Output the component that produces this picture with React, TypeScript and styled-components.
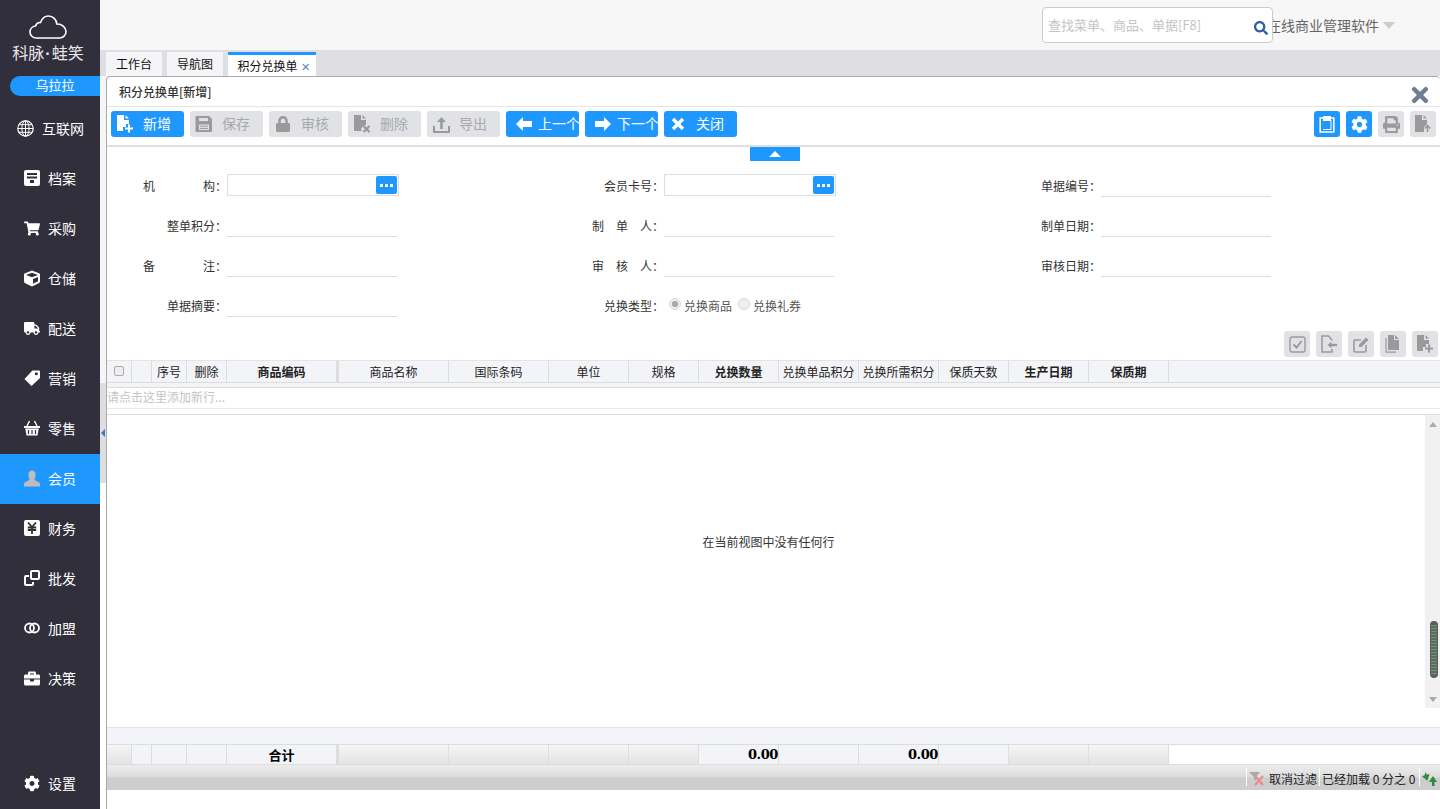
import React from "react";
import styled, { createGlobalStyle } from "styled-components";
import {
  FaBriefcase,
  FaCog,
  FaCube,
  FaLock,
  FaPrint,
  FaSearch,
  FaShoppingCart,
  FaTimes,
  FaTruck,
} from "react-icons/fa";

const BLUE = "#1e98ff";

const GlobalStyle = createGlobalStyle`
  html, body {
    margin: 0;
    padding: 0;
    height: 100%;
    background: #fff;
    overflow: hidden;
  }
  * { box-sizing: border-box; }
  body {
    font-family: "Noto Sans CJK SC", "Liberation Sans", sans-serif;
    font-size: 12px;
    color: #333;
  }
`;

/* drawn icons */
const Globe = () => (
  <svg width="17" height="17" viewBox="0 0 17 17" fill="none" stroke="#fff" strokeWidth="1">
    <circle cx="8.500" cy="8.500" r="7.700" strokeWidth="1.200" />
    <ellipse cx="8.500" cy="8.500" rx="3.600" ry="7.700" />
    <path d="M8.500 1v15M1 8.500h15M2 4.700h13M2 12.300h13" />
  </svg>
);
const Archive = () => (
  <svg width="16" height="16" viewBox="0 0 16 16">
    <rect width="16" height="16" rx="2" fill="#fff" />
    <path d="M3 3h10v2H3zM3 6.500h10v2H3zM6 10h4v3H6z" fill="#322f3c" />
  </svg>
);
const Tag = () => (
  <svg width="16" height="16" viewBox="0 0 16 16">
    <path d="M8.500.5H15a1 1 0 0 1 1 1V8l-8.500 8-7-7z" fill="#fff" />
    <circle cx="12.300" cy="3.700" r="1.500" fill="#322f3c" />
  </svg>
);
const Basket = () => (
  <svg width="16" height="16" viewBox="0 0 16 16">
    <path d="M3 6l2.500-5M13 6l-2.500-5" stroke="#fff" strokeWidth="1.400" fill="none" />
    <path d="M0 6h16v2H0z" fill="#fff" />
    <path d="M1.300 8.500h13.400L13.500 15.500h-11z" fill="#fff" />
    <path d="M4.500 10v4M8 10v4M11.500 10v4" stroke="#322f3c" strokeWidth="1.200" />
  </svg>
);
const Person = () => (
  <svg width="17" height="17" viewBox="0 0 17 17">
    <ellipse cx="8.500" cy="4.800" rx="3.800" ry="4.800" fill="#bdbdbd" />
    <path d="M0 17v-2.500C0 12 4.500 12 6 9h5c1.500 3 6 3 6 5.500V17z" fill="#bdbdbd" />
  </svg>
);
const Yen = () => (
  <svg width="16" height="16" viewBox="0 0 16 16">
    <rect width="16" height="16" rx="2" fill="#fff" />
    <path d="M4 2.500l4 4.500 4-4.500M3.800 7.500h8.400M3.800 10h8.400M8 7v7" fill="none" stroke="#322f3c" strokeWidth="1.800" />
  </svg>
);
const Wholesale = () => (
  <svg width="16" height="16" viewBox="0 0 16 16" fill="none" stroke="#fff" strokeWidth="2">
    <rect x="7" y="1" width="8" height="8" rx="1" />
    <path d="M5 6H2a1 1 0 0 0-1 1v7a1 1 0 0 0 1 1h6a1 1 0 0 0 1-1v-2" />
  </svg>
);
const Rings = () => (
  <svg width="16" height="12" viewBox="0 0 16 12" fill="none" stroke="#fff" strokeWidth="1.800">
    <circle cx="5.500" cy="6" r="4.500" />
    <circle cx="10.500" cy="6" r="4.500" />
  </svg>
);
const FilePlus = ({ color }: { color: string }) => (
  <svg width="18" height="18" viewBox="0 0 18 18">
    <path d="M1 0h7v5h5v4h-3v3H7v4H1z" fill={color} />
    <path d="M9.500 0v3.500H13z" fill={color} />
    <path d="M13 9.500v8M9 13.500h8" stroke={color} strokeWidth="2" />
  </svg>
);
const FileCross = ({ color }: { color: string }) => (
  <svg width="18" height="18" viewBox="0 0 18 18">
    <path d="M1 0h7v5h5v5l-3 1-2 3 1 2H1z" fill={color} />
    <path d="M9.500 0v3.500H13z" fill={color} />
    <path d="M10.500 11l6 6M16.500 11l-6 6" stroke={color} strokeWidth="2.200" />
  </svg>
);
const Floppy = ({ color }: { color: string }) => (
  <svg width="18" height="18" viewBox="0 0 18 18">
    <path d="M1.500 1H14l3 3v12a1 1 0 0 1-1 1H1.500a1 1 0 0 1-1-1V2a1 1 0 0 1 1-1z" fill={color} />
    <path d="M4 3h9v3H4zM4 9.500h10V15H4z" fill="#e0e2e6" />
    <path d="M5 11.200h8M5 13.400h8" stroke={color} strokeWidth="1" />
  </svg>
);
const Upload = ({ color }: { color: string }) => (
  <svg width="17" height="17" viewBox="0 0 17 17" fill="none">
    <path d="M1 10v6h15v-6" stroke={color} strokeWidth="2" />
    <path d="M8.500 13V4" stroke={color} strokeWidth="2.600" />
    <path d="M4 6l4.500-5L13 6z" fill={color} />
  </svg>
);
const ArrowLeft = () => (
  <svg width="16" height="14" viewBox="0 0 16 14">
    <path d="M0 7l7-7v4h9v6H7v4z" fill="#fff" />
  </svg>
);
const ArrowRight = () => (
  <svg width="16" height="14" viewBox="0 0 16 14">
    <path d="M16 7L9 0v4H0v6h9v4z" fill="#fff" />
  </svg>
);
const Cross = () => (
  <svg width="14" height="14" viewBox="0 0 14 14">
    <path d="M2 2l10 10M12 2L2 12" stroke="#fff" strokeWidth="3.400" />
  </svg>
);
const Dots = () => (
  <svg width="13" height="3" viewBox="0 0 13 3">
    <path d="M0 0h3v3H0zM5 0h3v3H5zM10 0h3v3h-3z" fill="#fff" />
  </svg>
);
const Clipboard = () => (
  <svg width="16" height="18" viewBox="0 0 16 18" fill="none" stroke="#fff">
    <path d="M4 3H1.200v14h13.600V3H12" strokeWidth="1.600" />
    <path d="M4.500 1.500h7V5h-7z" fill="#fff" />
    <path d="M4 5.500h8v9H4" strokeWidth="1" />
  </svg>
);
const FileUp = ({ color }: { color: string }) => (
  <svg width="18" height="18" viewBox="0 0 18 18">
    <path d="M1 0h7v5h5v4l-3 3v5H1z" fill={color} />
    <path d="M9.500 0v3.500H13z" fill={color} />
    <path d="M13.500 17v-6M10.800 13.500l2.700-3 2.700 3" fill="none" stroke={color} strokeWidth="1.600" />
  </svg>
);
const CheckBoxIcon = ({ color }: { color: string }) => (
  <svg width="17" height="17" viewBox="0 0 17 17" fill="none" stroke={color}>
    <rect x="1" y="1" width="15" height="15" rx="2" strokeWidth="1.400" />
    <path d="M4.500 8.500l3 3 5-6.500" strokeWidth="2" />
  </svg>
);
const FileImport = ({ color }: { color: string }) => (
  <svg width="18" height="18" viewBox="0 0 18 18" fill="none" stroke={color}>
    <path d="M12 5.500V5L8.500 1H2v16h10v-3" strokeWidth="1.500" />
    <path d="M17 10H10" strokeWidth="2.400" />
    <path d="M11.500 6.800v6.400L7.500 10z" fill={color} stroke="none" />
  </svg>
);
const EditBox = ({ color }: { color: string }) => (
  <svg width="17" height="17" viewBox="0 0 17 17" fill="none" stroke={color}>
    <path d="M13 9v6a1 1 0 0 1-1 1H2a1 1 0 0 1-1-1V5a1 1 0 0 1 1-1h6" strokeWidth="1.600" />
    <path d="M6 8.500l7-7 2.500 2.500-7 7H6z" fill={color} stroke="none" />
  </svg>
);
const Copies = ({ color }: { color: string }) => (
  <svg width="16" height="18" viewBox="0 0 16 18">
    <path d="M3 0h6v5h5v10H3z" fill={color} />
    <path d="M10 0v4h4z" fill={color} />
    <path d="M1 3v14.200h10" fill="none" stroke={color} strokeWidth="1.200" />
  </svg>
);
const Cloud = () => (
  <svg width="38" height="24" viewBox="0 0 38 24" fill="none" stroke="#fff" strokeWidth="1.600">
    <path d="M9 23H7.500C3.800 23 1 20.300 1 17c0-3 2.400-5.600 5.500-6C7.400 8.400 9.500 7.200 11.500 7.500 13 3.500 16 1 19.500 1c4.500 0 8 3.500 8.300 8 4.900-.3 9.200 3.300 9.200 7.500 0 3.700-2.800 6.500-6.500 6.500z" />
  </svg>
);
const FilterOff = () => (
  <svg width="15" height="14" viewBox="0 0 15 14">
    <path d="M0 0h11L7 5v4L5 7V5z" fill="#a9a9a9" />
    <path d="M6 4l8 9M14 4l-8 9" stroke="#e88" strokeWidth="2" />
  </svg>
);
const Refresh = () => (
  <svg width="15" height="14" viewBox="0 0 15 14">
    <path d="M5 0v3h3L4 9 0 3h2.500z" fill="#2e8b3d" transform="rotate(-15 4 4)" />
    <path d="M10 14v-4H7l4-6 4 6h-2.500v4z" fill="#2e8b3d" />
  </svg>
);

/* page frame */
const Page = styled.div`
  display: flex;
  width: 1440px;
  height: 809px;
  overflow: hidden;
`;

const Sidebar = styled.aside`
  width: 100px;
  flex: none;
  display: flex;
  flex-direction: column;
  background: #322f3c;
`;

const LogoBox = styled.div`
  height: 76px;
  padding: 15px 4px 0 0;
  display: flex;
  flex-direction: column;
  align-items: center;
`;

const LogoText = styled.div`
  color: #e8e8e8;
  font-size: 16px;
  line-height: 20px;
  margin-top: 3px;
  white-space: nowrap;
  span {
    font-family: "Liberation Sans", sans-serif;
    font-weight: 700;
    margin: 0 1px;
  }
`;

const UserBadge = styled.div`
  height: 20px;
  margin-left: 10px;
  margin-bottom: 8px;
  border-radius: 10px 0 0 10px;
  background: ${BLUE};
  color: #fff;
  font-size: 13px;
  text-align: center;
  line-height: 17px;
`;

const Menu = styled.nav`
  display: flex;
  flex-direction: column;
  flex: 1;
`;

const MenuItem = styled.div<{ $active?: boolean; $wide?: boolean; $bottom?: boolean }>`
  height: 50px;
  flex: none;
  display: flex;
  align-items: center;
  gap: 8px;
  padding: 0 0 2px ${(p) => (p.$wide ? 17 : 24)}px;
  color: #fff;
  font-size: 14px;
  background: ${(p) => (p.$active ? BLUE : "transparent")};
  margin-top: ${(p) => (p.$bottom ? "auto" : 0)};
`;

const IconSlot = styled.span<{ $wide?: boolean }>`
  width: ${(p) => (p.$wide ? 17 : 16)}px;
  display: flex;
  justify-content: center;
  align-items: center;
  color: #fff;
  font-size: 17px;
`;

const Main = styled.main`
  flex: 1;
  min-width: 0;
  display: flex;
  flex-direction: column;
`;

const TopBar = styled.header`
  height: 50px;
  flex: none;
  background: #f7f7f8;
  display: flex;
  align-items: center;
  justify-content: flex-end;
  padding-right: 45px;
`;

const SearchBox = styled.div`
  position: relative;
  width: 231px;
  height: 36px;
  margin-right: -6px;
  z-index: 1;
  background: #fff;
  border: 1px solid #ccc;
  border-radius: 4px;
  padding: 7px 5px;
  color: #c4c4c4;
  font-size: 13px;
  line-height: 20px;
  svg {
    position: absolute;
    right: 4px;
    top: 13px;
    color: #2a5ea8;
    font-size: 14px;
  }
`;

const CompanyName = styled.div`
  display: flex;
  align-items: center;
  gap: 4px;
  padding-bottom: 1px;
  color: #666;
  font-size: 14px;
  white-space: nowrap;
  &::after {
    content: "";
    border-left: 6px solid transparent;
    border-right: 6px solid transparent;
    border-top: 7px solid #ccc;
    margin-top: 1px;
  }
`;

const TabBar = styled.div`
  height: 26px;
  flex: none;
  background: #dedee3;
  display: flex;
  gap: 5px;
  padding: 2px 0 0 6px;
`;

const Tab = styled.div<{ $active?: boolean }>`
  width: ${(p) => (p.$active ? 88 : 56)}px;
  border-top: ${(p) => (p.$active ? `3px solid ${BLUE}` : "0")};
  background: ${(p) => (p.$active ? "#fff" : "#f5f5f7")};
  padding-left: ${(p) => (p.$active ? 3 : 0)}px;
  display: flex;
  align-items: center;
  justify-content: center;
  gap: 3px;
  color: #111;
  line-height: 22px;
  white-space: nowrap;
  span { color: #5a7fb5; font-size: 11px; }
`;

const Workspace = styled.div`
  flex: 1;
  min-height: 0;
  display: flex;
`;

const Gutter = styled.div`
  width: 6px;
  flex: none;
  display: flex;
  flex-direction: column;
  background: #f5f5f7;
`;

const GutterHandle = styled.div`
  height: 100px;
  margin-top: 307px;
  background: #dedee0;
  display: flex;
  align-items: center;
  justify-content: center;
  &::before {
    content: "";
    border-top: 4px solid transparent;
    border-bottom: 4px solid transparent;
    border-right: 4px solid #3a78c2;
  }
`;

const GutterRest = styled.div`
  flex: 1;
  background: #fff;
`;

const Panel = styled.section`
  flex: 1;
  min-width: 0;
  display: flex;
  flex-direction: column;
  border-left: 1px solid #a9a9a9;
  border-top: 1px solid #a9a9a9;
  border-top-left-radius: 4px;
  border-top-right-radius: 4px;
  background: #fff;
`;

const PanelTitle = styled.div`
  height: 30px;
  flex: none;
  display: flex;
  align-items: center;
  justify-content: space-between;
  padding: 0 8px 0 12px;
  border-bottom: 1px solid #e4e4e4;
  color: #333;
  font-weight: 500;
  svg { color: #6f7f92; font-size: 24px; margin-top: 3px; margin-bottom: -3px; }
`;

const Toolbar = styled.div`
  height: 40px;
  flex: none;
  display: flex;
  justify-content: space-between;
  padding: 4px 4px 0 4px;
  border-bottom: 2px solid #e0e0e0;
`;

const ButtonRow = styled.div`
  display: flex;
  gap: 6px;
  height: 26px;
`;

const ActionButton = styled.button<{ $on?: boolean }>`
  width: 73px;
  height: 26px;
  border: 0;
  border-radius: 3px;
  padding: 0 0 2px 5px;
  display: flex;
  align-items: center;
  gap: 9px;
  background: ${(p) => (p.$on ? BLUE : "#e0e2e6")};
  color: ${(p) => (p.$on ? "#fff" : "#a9a9a9")};
  font-family: inherit;
  font-size: 14px;
  white-space: nowrap;
  overflow: hidden;
`;

const ToolIcon = styled.span<{ $shift?: number }>`
  width: 18px;
  flex: none;
  display: flex;
  align-items: center;
  justify-content: center;
  margin-bottom: -2px;
  transform: translateX(${(p) => p.$shift ?? 0}px);
  color: #9a9a9a;
  font-size: 16px;
`;

const IconButton = styled.button<{ $on?: boolean }>`
  width: 26px;
  height: 26px;
  padding: 0;
  border: 0;
  border-radius: 3px;
  display: flex;
  align-items: center;
  justify-content: center;
  background: ${(p) => (p.$on ? BLUE : "#e0e2e6")};
  color: ${(p) => (p.$on ? "#fff" : "#9a9a9a")};
  font-size: 17px;
`;

const CollapseTab = styled.div`
  width: 50px;
  height: 14px;
  margin: 0 0 0 643px;
  flex: none;
  background: ${BLUE};
  display: flex;
  align-items: center;
  justify-content: center;
  &::before {
    content: "";
    border-left: 6px solid transparent;
    border-right: 6px solid transparent;
    border-bottom: 6px solid #fff;
  }
`;

const Form = styled.div`
  flex: none;
  display: grid;
  grid-template-columns: 437px 437px 1fr;
  grid-auto-rows: 40px;
  padding-top: 4px;
`;

const Field = styled.div`
  display: flex;
  align-items: center;
`;

const Label = styled.label<{ $spread?: boolean }>`
  width: 120px;
  flex: none;
  padding: 1px 0 0 ${(p) => (p.$spread ? 36 : 0)}px;
  display: flex;
  justify-content: ${(p) => (p.$spread ? "space-between" : "flex-end")};
  color: #333;
  white-space: pre;
`;

const LineInput = styled.div`
  width: 170px;
  height: 22px;
  margin-top: 2px;
  border-bottom: 1px solid #ddd;
`;

const PickInput = styled.div`
  width: 172px;
  height: 22px;
  border: 1px solid #ddd;
  padding: 1px;
  display: flex;
  justify-content: flex-end;
`;

const PickButton = styled.span`
  width: 21px;
  height: 18px;
  border-radius: 2px;
  background: ${BLUE};
  display: flex;
  align-items: center;
  justify-content: center;
`;

const RadioRow = styled.div`
  display: flex;
  align-items: center;
  gap: 3px;
  padding-left: 5px;
`;

const Radio = styled.span<{ $checked?: boolean }>`
  width: 12px;
  height: 12px;
  border-radius: 50%;
  border: 1px solid #d8d8d8;
  background: ${(p) =>
    p.$checked ? "radial-gradient(circle, #aaa 0 3px, #eee 3.5px)" : "#eee"};
  margin-top: -2px;
`;

const RadioText = styled.span`
  margin-right: 3px;
  color: #555;
`;

const GridTools = styled.div`
  flex: none;
  height: 29px;
  margin: 6px 2px 0 0;
  display: flex;
  justify-content: flex-end;
  gap: 6px;
  button { flex: none; }
`;

const COLUMNS = [25, 20, 35, 40, 110, 2, 110, 100, 80, 70, 80, 80, 80, 70, 80, 80];

const HeaderRow = styled.div`
  height: 23px;
  flex: none;
  display: flex;
  background: #f3f4f8;
  border-top: 1px solid #e4e4e4;
  border-bottom: 1px solid #ddd;
`;

const HeaderCell = styled.div<{ $bold?: boolean; $w: number }>`
  width: ${(p) => p.$w}px;
  flex: none;
  display: flex;
  align-items: center;
  justify-content: center;
  padding-bottom: 1px;
  border-right: 1px solid #ddd;
  color: #222;
  font-weight: ${(p) => (p.$bold ? 700 : 400)};
  white-space: nowrap;
  overflow: hidden;
`;

const FrozenBar = styled.div<{ $w: number }>`
  width: ${(p) => p.$w}px;
  flex: none;
  background: #ddd;
`;

const CheckMark = styled.span`
  width: 10px;
  height: 10px;
  border: 1px solid #aaa;
  border-radius: 2px;
  background: #eee;
`;

const Strip = styled.div`
  height: 5px;
  flex: none;
  background: #f3f4f8;
  border-bottom: 1px solid #ddd;
`;

const NewRow = styled.div`
  height: 21px;
  flex: none;
  line-height: 18px;
  color: #c4c4c4;
  border-bottom: 1px solid #e8e8ec;
`;

const GridBody = styled.div`
  flex: 1;
  min-height: 0;
  display: flex;
  border-top: 1px solid #ddd;
  margin-top: 5px;
`;

const EmptyText = styled.div`
  flex: 1;
  display: flex;
  align-items: center;
  justify-content: center;
  margin-right: -5px;
  padding-bottom: 60px;
  color: #333;
`;

const Scrollbar = styled.div`
  width: 15px;
  height: 293px;
  flex: none;
  background: #f1f1f1;
  display: flex;
  flex-direction: column;
  align-items: center;
  justify-content: space-between;
  position: relative;
  padding: 7px 0 6px;
  &::before,
  &::after {
    content: "";
    border-left: 4px solid transparent;
    border-right: 4px solid transparent;
  }
  &::before { border-bottom: 5px solid #aaa; }
  &::after { border-top: 5px solid #aaa; }
`;

const ScrollThumb = styled.div`
  position: absolute;
  top: 206px;
  left: 5px;
  width: 8px;
  height: 57px;
  border-radius: 4px;
  background: repeating-linear-gradient(#58a06c 0 1px, #666 1px 3px);
  border: 1px solid #5c5c5c;
  border-top-width: 4px;
  border-bottom-width: 3px;
`;

const FooterBand = styled.div`
  height: 17px;
  flex: none;
  background: #f3f4f8;
  border-top: 1px solid #e4e4e4;
`;

const SummaryRow = styled.div`
  height: 21px;
  flex: none;
  display: flex;
  border-top: 1px solid #ddd;
  border-bottom: 1px solid #ddd;
  background: #fff;
`;

const SummaryCell = styled.div<{ $w: number; $light?: boolean }>`
  width: ${(p) => p.$w}px;
  flex: none;
  display: flex;
  align-items: center;
  justify-content: center;
  border-right: 1px solid #ddd;
  background: ${(p) =>
    p.$light ? "#f3f4f8" : "linear-gradient(#f5f5f5, #e4e4e4)"};
  color: #000;
  font-size: 13px;
  font-weight: 700;
  line-height: 20px;
`;

const AmountCell = styled(SummaryCell)`
  justify-content: flex-end;
  font-family: "DejaVu Serif", "Liberation Serif", serif;
  font-size: 13px;
  letter-spacing: -0.4px;
`;

const StatusBar = styled.div`
  height: 25px;
  flex: none;
  display: flex;
  justify-content: flex-end;
  align-items: flex-start;
  background: linear-gradient(#ededed 0, #dcdcdc 12px, #cccdcc 13px, #cccdcc 25px);
  color: #222;
`;

const StatusItem = styled.div<{ $w: number }>`
  width: ${(p) => p.$w}px;
  height: 18px;
  margin-top: 3px;
  display: flex;
  align-items: center;
  gap: 5px;
  padding: 3px 0 0 2px;
  border-left: 1px solid #fff;
  white-space: nowrap;
  overflow: hidden;
`;

const BottomGap = styled.div`
  height: 19px;
  flex: none;
  background: #fff;
`;

const menuItems = [
  { label: "互联网", icon: <Globe />, wide: true },
  { label: "档案", icon: <Archive /> },
  { label: "采购", icon: <FaShoppingCart /> },
  { label: "仓储", icon: <FaCube /> },
  { label: "配送", icon: <FaTruck /> },
  { label: "营销", icon: <Tag /> },
  { label: "零售", icon: <Basket /> },
  { label: "会员", icon: <Person />, active: true },
  { label: "财务", icon: <Yen /> },
  { label: "批发", icon: <Wholesale /> },
  { label: "加盟", icon: <Rings /> },
  { label: "决策", icon: <FaBriefcase /> },
];

const headers = [
  { t: "" }, { t: "" }, { t: "序号" }, { t: "删除" },
  { t: "商品编码", bold: true }, { t: "|" },
  { t: "商品名称" }, { t: "国际条码" }, { t: "单位" }, { t: "规格" },
  { t: "兑换数量", bold: true }, { t: "兑换单品积分" }, { t: "兑换所需积分" },
  { t: "保质天数" }, { t: "生产日期", bold: true }, { t: "保质期", bold: true },
];

const GREY = "#9a9a9a";

export default function App() {
  return (
    <Page>
      <GlobalStyle />
      <Sidebar>
        <LogoBox>
          <Cloud />
          <LogoText>科脉<span>·</span>蛙笑</LogoText>
        </LogoBox>
        <UserBadge>乌拉拉</UserBadge>
        <Menu>
          {menuItems.map((m) => (
            <MenuItem key={m.label} $active={m.active} $wide={m.wide}>
              <IconSlot $wide={m.wide}>{m.icon}</IconSlot>
              {m.label}
            </MenuItem>
          ))}
          <MenuItem $bottom>
            <IconSlot><FaCog /></IconSlot>
            设置
          </MenuItem>
        </Menu>
      </Sidebar>

      <Main>
        <TopBar>
          <SearchBox>
            查找菜单、商品、单据[F8]
            <FaSearch />
          </SearchBox>
          <CompanyName>在线商业管理软件</CompanyName>
        </TopBar>
        <TabBar>
          <Tab>工作台</Tab>
          <Tab>导航图</Tab>
          <Tab $active>积分兑换单<span>✕</span></Tab>
        </TabBar>
        <Workspace>
          <Gutter>
            <GutterHandle />
            <GutterRest />
          </Gutter>
          <Panel>
            <PanelTitle>
              积分兑换单[新增]
              <FaTimes />
            </PanelTitle>
            <Toolbar>
              <ButtonRow>
                <ActionButton $on><ToolIcon><FilePlus color="#fff" /></ToolIcon>新增</ActionButton>
                <ActionButton><ToolIcon><Floppy color={GREY} /></ToolIcon>保存</ActionButton>
                <ActionButton><ToolIcon><FaLock /></ToolIcon>审核</ActionButton>
                <ActionButton><ToolIcon><FileCross color={GREY} /></ToolIcon>删除</ActionButton>
                <ActionButton><ToolIcon><Upload color={GREY} /></ToolIcon>导出</ActionButton>
                <ActionButton $on><ToolIcon $shift={4}><ArrowLeft /></ToolIcon>上一个</ActionButton>
                <ActionButton $on><ToolIcon $shift={4}><ArrowRight /></ToolIcon>下一个</ActionButton>
                <ActionButton $on><ToolIcon><Cross /></ToolIcon>关闭</ActionButton>
              </ButtonRow>
              <ButtonRow>
                <IconButton $on><Clipboard /></IconButton>
                <IconButton $on><FaCog /></IconButton>
                <IconButton><FaPrint /></IconButton>
                <IconButton><FileUp color={GREY} /></IconButton>
              </ButtonRow>
            </Toolbar>
            <CollapseTab />
            <Form>
              <Field>
                <Label $spread><span>机</span><span>构：</span></Label>
                <PickInput><PickButton><Dots /></PickButton></PickInput>
              </Field>
              <Field>
                <Label>会员卡号：</Label>
                <PickInput><PickButton><Dots /></PickButton></PickInput>
              </Field>
              <Field>
                <Label>单据编号：</Label>
                <LineInput />
              </Field>
              <Field>
                <Label>整单积分：</Label>
                <LineInput />
              </Field>
              <Field>
                <Label>制　单　人：</Label>
                <LineInput />
              </Field>
              <Field>
                <Label>制单日期：</Label>
                <LineInput />
              </Field>
              <Field>
                <Label $spread><span>备</span><span>注：</span></Label>
                <LineInput />
              </Field>
              <Field>
                <Label>审　核　人：</Label>
                <LineInput />
              </Field>
              <Field>
                <Label>审核日期：</Label>
                <LineInput />
              </Field>
              <Field>
                <Label>单据摘要：</Label>
                <LineInput />
              </Field>
              <Field>
                <Label>兑换类型：</Label>
                <RadioRow>
                  <Radio $checked />
                  <RadioText>兑换商品</RadioText>
                  <Radio />
                  <RadioText>兑换礼券</RadioText>
                </RadioRow>
              </Field>
            </Form>
            <GridTools>
              <IconButton><CheckBoxIcon color={GREY} /></IconButton>
              <IconButton><FileImport color={GREY} /></IconButton>
              <IconButton><EditBox color={GREY} /></IconButton>
              <IconButton><Copies color={GREY} /></IconButton>
              <IconButton><FilePlus color={GREY} /></IconButton>
            </GridTools>
            <HeaderRow>
              {headers.map((h, i) =>
                h.t === "|" ? (
                  <FrozenBar key={i} $w={COLUMNS[i]} />
                ) : (
                  <HeaderCell key={i} $w={COLUMNS[i]} $bold={h.bold}>
                    {i === 0 ? <CheckMark /> : h.t}
                  </HeaderCell>
                )
              )}
            </HeaderRow>
            <Strip />
            <NewRow>请点击这里添加新行...</NewRow>
            <GridBody>
              <EmptyText>在当前视图中没有任何行</EmptyText>
              <Scrollbar><ScrollThumb /></Scrollbar>
            </GridBody>
            <FooterBand />
            <SummaryRow>
              {COLUMNS.map((w, i) => {
                if (i === 5) return <FrozenBar key={i} $w={w} />;
                if (i === 10 || i === 12)
                  return <AmountCell key={i} $w={w} $light>0.00</AmountCell>;
                const light = (i >= 1 && i <= 4) || i === 11 || i === 13;
                return (
                  <SummaryCell key={i} $w={w} $light={light}>
                    {i === 4 ? "合计" : ""}
                  </SummaryCell>
                );
              })}
            </SummaryRow>
            <StatusBar>
              <StatusItem $w={73}><FilterOff />取消过滤</StatusItem>
              <StatusItem $w={100}>已经加载 0 分之 0</StatusItem>
              <StatusItem $w={21}><Refresh /></StatusItem>
            </StatusBar>
            <BottomGap />
          </Panel>
        </Workspace>
      </Main>
    </Page>
  );
}
